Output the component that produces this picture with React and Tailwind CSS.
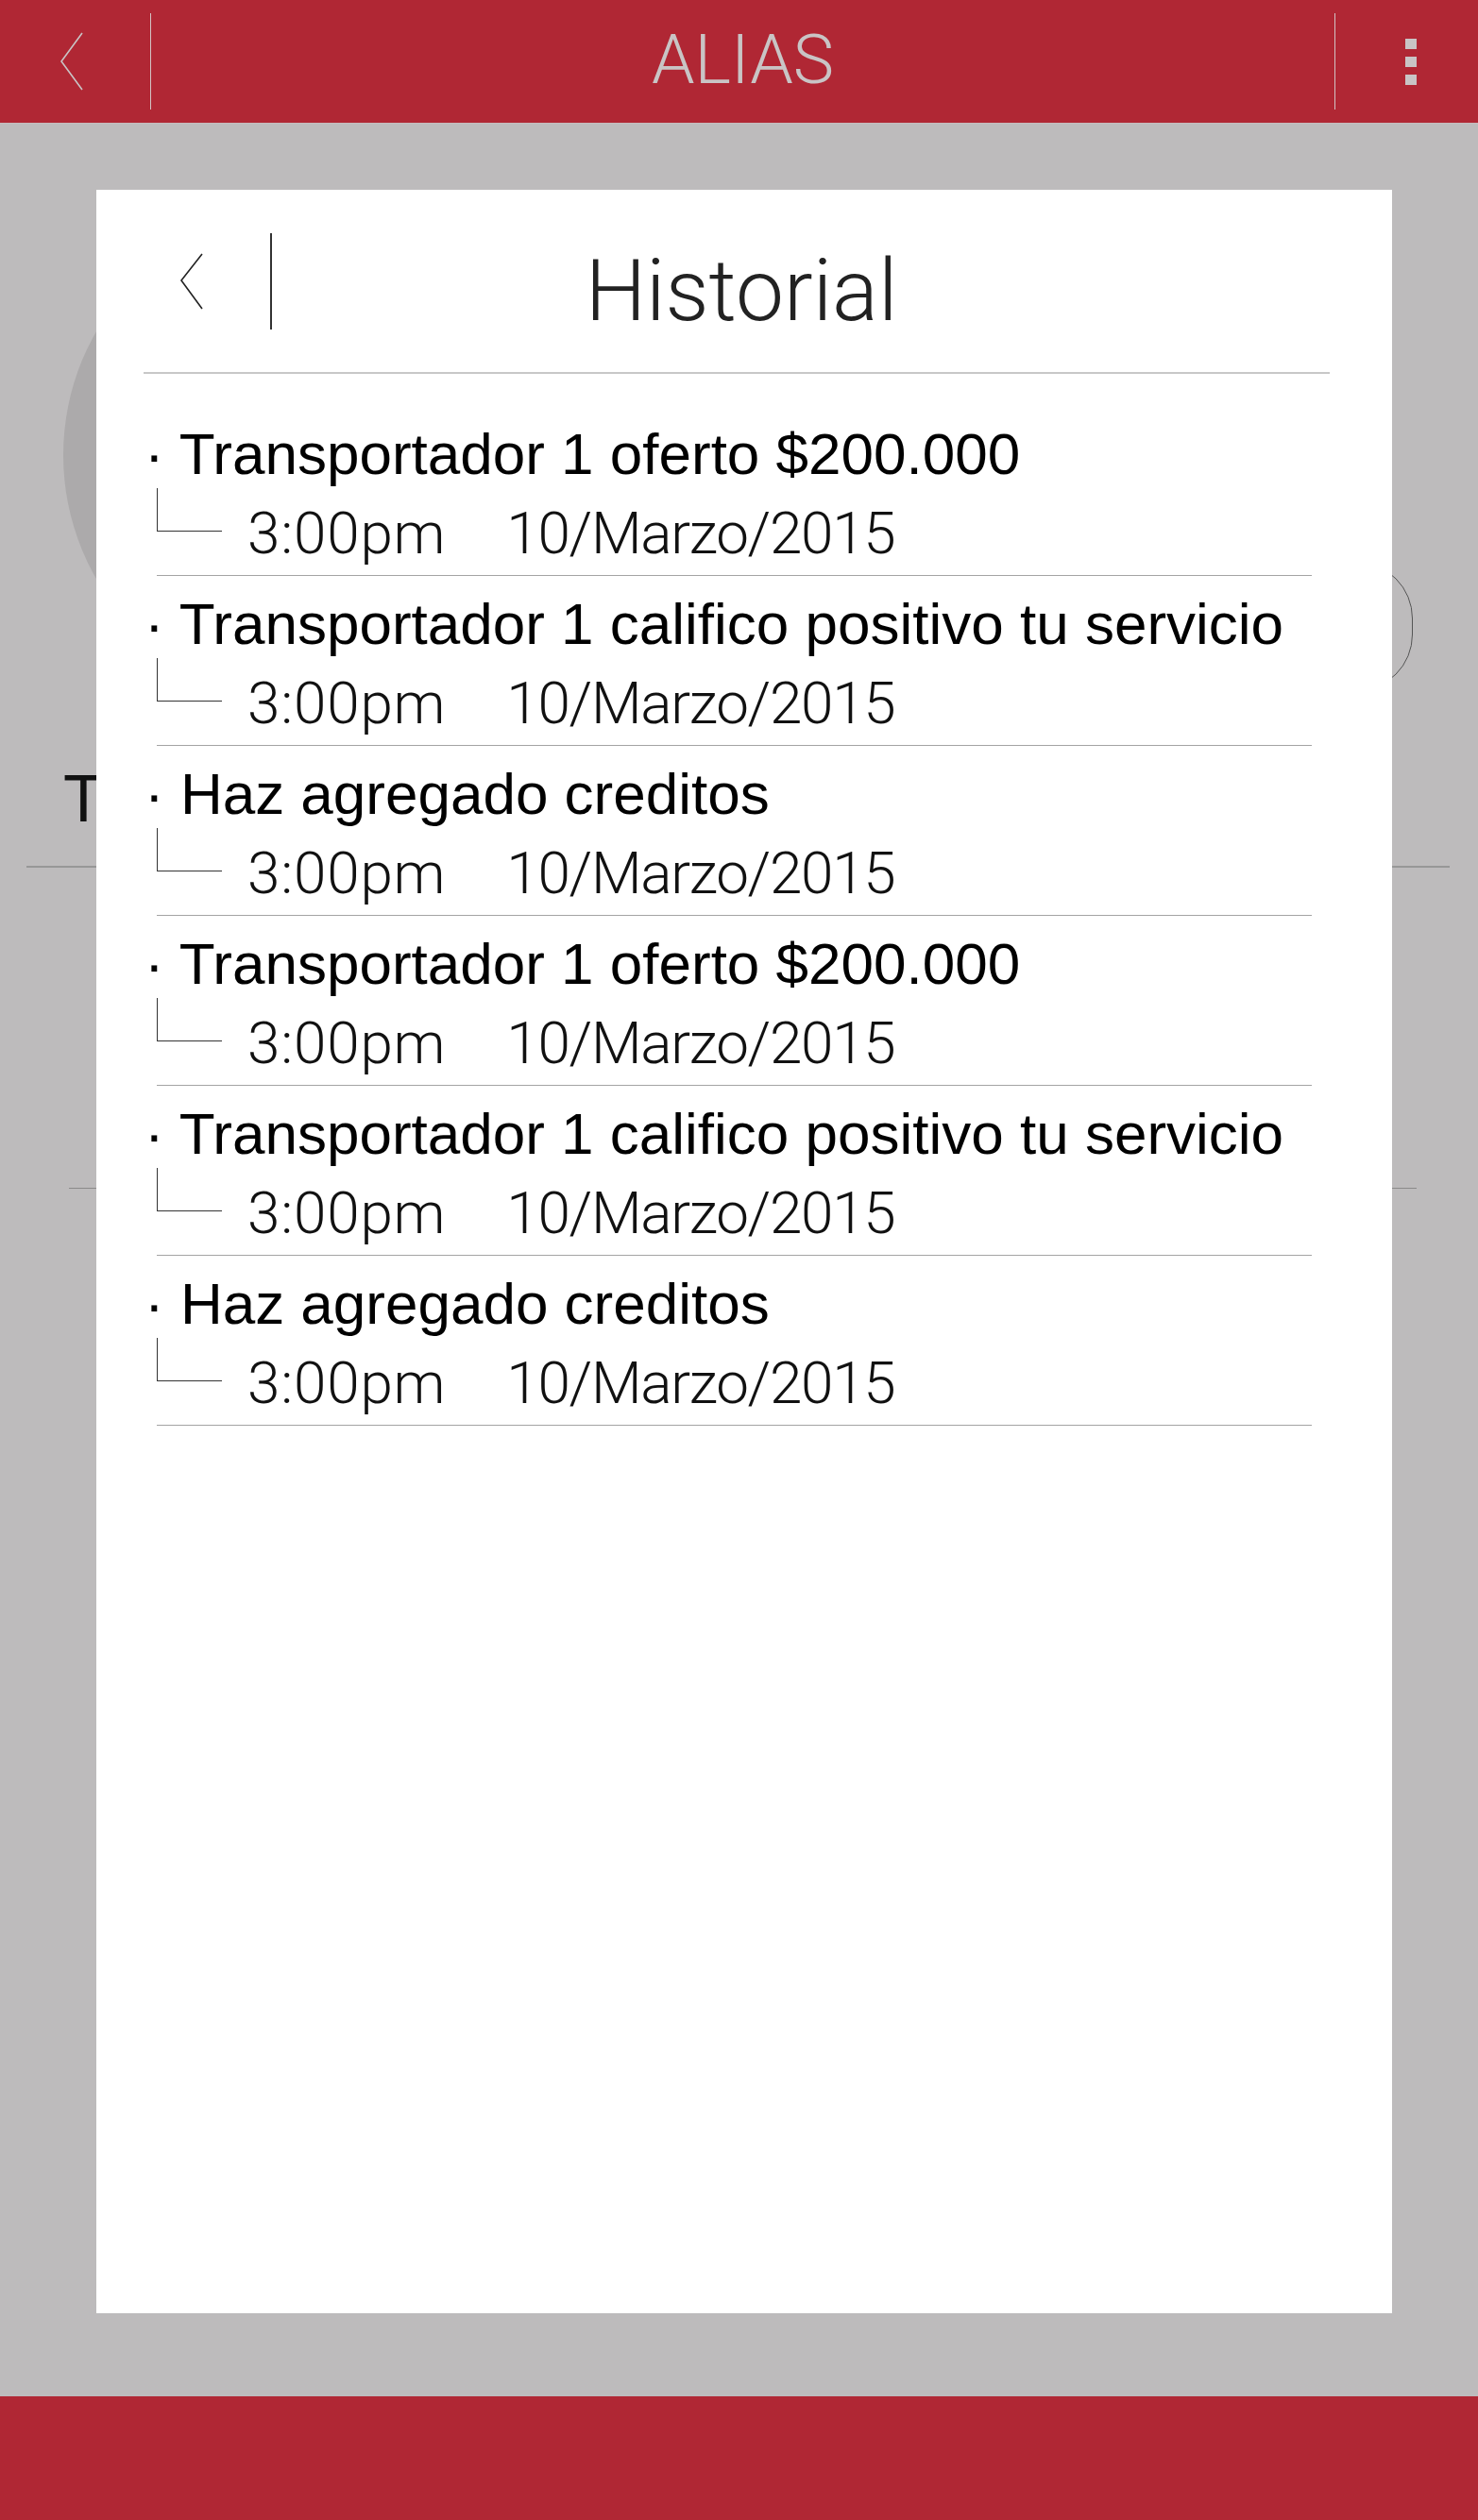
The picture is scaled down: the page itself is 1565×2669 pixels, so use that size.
import React from 'react';

const ITEMS = [
  'Transportador 1 oferto $200.000',
  'Transportador 1 califico positivo tu servicio',
  'Haz agregado creditos',
  'Transportador 1 oferto $200.000',
  'Transportador 1 califico positivo tu servicio',
  'Haz agregado creditos',
];

// ── Top bar ──────────────────────────────────────────────────────────────────
const TopBar = () => (
  <header className="flex h-[130px] items-center bg-[#b02734]">
    <div className="flex w-[159px] items-center pl-[64px]">
      <svg width="24" height="62" viewBox="0 0 24 62" fill="none" aria-hidden="true">
        <polyline points="23,1 1,31 23,61" stroke="#c9c4c5" strokeWidth="1.6" />
      </svg>
    </div>
    <div className="h-[102px] w-px bg-[#d2c4c5]" />
    <h1 className="mb-[3px] flex-1 text-center font-['Roboto',sans-serif] text-[73px] font-light leading-[73px] text-[#c9c4c5]">
      ALIAS
    </h1>
    <div className="h-[102px] w-px bg-[#d2c4c5]" />
    <div className="flex w-[151px] flex-col gap-[8px] pl-[74px]">
      <span className="h-[11px] w-[12px] bg-[#c9c4c5]" />
      <span className="h-[11px] w-[12px] bg-[#c9c4c5]" />
      <span className="h-[11px] w-[12px] bg-[#c9c4c5]" />
    </div>
  </header>
);

// ── Page behind the dialog (only its edges show) ─────────────────────────────
const BackgroundPage = () => (
  <div className="h-[2408px] border-t border-[#c6bcbd] bg-[#bdbbbc]">
    <div className="flex items-start justify-between pt-[88px]">
      <div className="ml-[67px] h-[526px] w-[526px] rounded-full bg-[#acaaab]" />
      <div className="mr-[69px] mt-[376px] h-[137px] w-[420px] rounded-[60px] border-[1.5px] border-[#555]" />
    </div>
    <p className="ml-[67px] mt-[66px] font-['Liberation_Sans',Arial,sans-serif] text-[70px] leading-[70px] text-[#111]">
      T
    </p>
    <div className="ml-[28px] mt-[36px] h-[2px] w-[1507px] bg-[#979797]" />
    <div className="ml-[73px] mt-[339px] h-px w-[1427px] bg-[#8a8a8a]" />
  </div>
);

// ── One history row ──────────────────────────────────────────────────────────
const HistoryItem = ({ text }) => (
  <div className="pt-[20px]">
    <p className="h-[62px] whitespace-nowrap font-['Liberation_Sans',Arial,sans-serif] text-[62px] leading-[62px] text-black">
      · {text}
    </p>
    <div className="mt-[22px] flex h-[62px] items-start font-['Roboto',sans-serif] text-[62px] font-light leading-[62px] text-[#111]">
      <div className="ml-[13px] mt-[-17px] h-[46px] w-[69px] shrink-0 border-b-[1.5px] border-l-[1.5px] border-[#333]" />
      <span className="ml-[27px] tracking-[0.8px]">3:00pm</span>
      <span className="ml-[64px] tracking-[-1.3px]">10/Marzo/2015</span>
    </div>
    <div className="ml-[13px] mt-[13px] h-px w-[1223px] bg-[#a4a4a4]" />
  </div>
);

// ── Dialog ───────────────────────────────────────────────────────────────────
const HistoryDialog = () => (
  <div className="absolute left-[102px] top-[201px] h-[2249px] w-[1372px] bg-white">
    <div className="grid h-[193px] grid-cols-[1fr_auto_1fr] items-center">
      <div className="flex items-center pl-[89px]">
        <svg width="24" height="60" viewBox="0 0 24 60" fill="none" aria-hidden="true">
          <polyline points="23,1 1,29 23,59" stroke="#222" strokeWidth="1.6" />
        </svg>
        <div className="ml-[71px] h-[102px] w-[1.5px] bg-[#333]" />
      </div>
      <h2 className="mr-[6px] mt-[22px] font-['Roboto',sans-serif] text-[91px] font-light leading-[93px] text-[#222]">
        Historial
      </h2>
      <div />
    </div>
    <div className="ml-[50px] h-[1.5px] w-[1256px] bg-[#c8c8c8]" />

    <div className="pl-[51px] pt-[34px]">
      {ITEMS.map((t, i) => (
        <HistoryItem key={i} text={t} />
      ))}
    </div>
  </div>
);

const App = () => (
  <div className="relative h-[2669px] w-[1565px] overflow-hidden bg-[#bdbbbc]">
    <TopBar />
    <BackgroundPage />
    <footer className="h-[131px] bg-[#b02734]" />
    <HistoryDialog />
  </div>
);

export default App;
